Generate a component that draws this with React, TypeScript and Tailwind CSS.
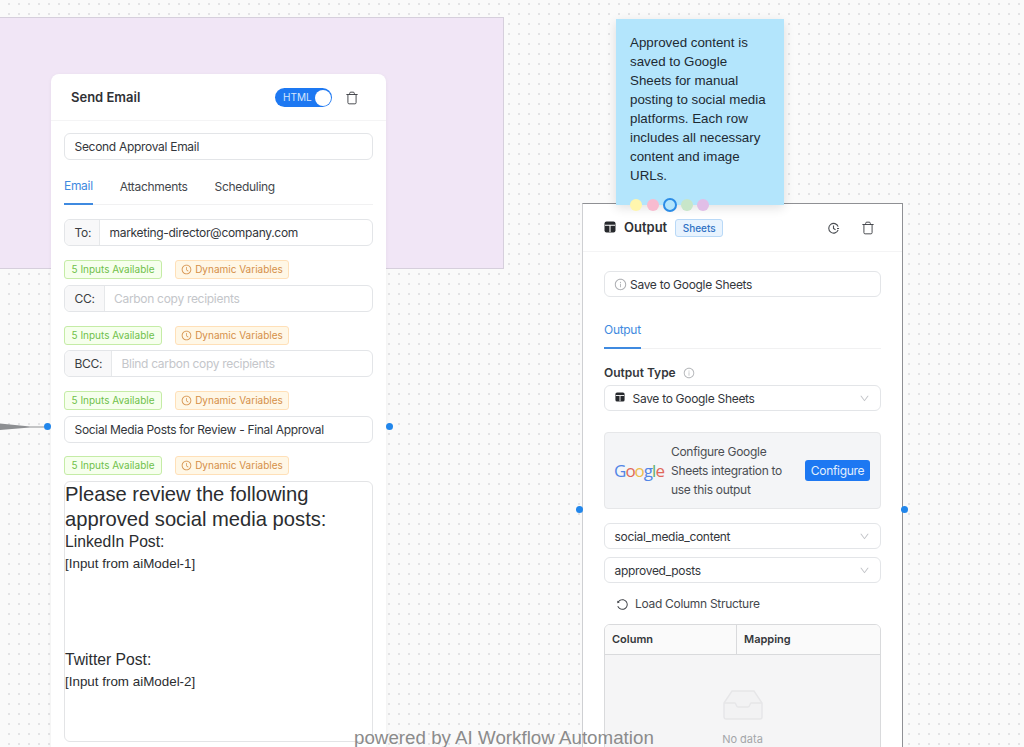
import React from "react";
import { AiOutlineClockCircle, AiOutlineInfoCircle, AiOutlineDown, AiOutlineReload } from "react-icons/ai";
import { Trash } from "lucide-react";

function Badges({ className = "" }: { className?: string }) {
  return (
    <div className={"flex items-center gap-[13px] tracking-normal " + className}>
      <span className="flex h-[19px] w-[98px] items-center justify-center rounded-[3px] border border-[#c5eca6] bg-[#f6ffed] text-[10px] text-[#6fbf4a]">5 Inputs Available</span>
      <span className="flex h-[19px] w-[114px] items-center justify-center gap-[3px] rounded-[3px] border border-[#ffe0b8] bg-[#fff7e6] text-[10px] text-[#d58f48]">
        <AiOutlineClockCircle className="h-[11px] w-[11px]" />
        Dynamic Variables
      </span>
    </div>
  );
}

function AddonInput({ label, value, placeholder, labelW }: { label: string; value?: string; placeholder?: string; labelW: string }) {
  return (
    <div className="flex h-[27px] items-stretch rounded-[6px] border border-[#e3e5e8] bg-white text-[12px]">
      <span className={"flex items-center rounded-l-[6px] border-r border-[#e6e8ea] bg-[#f8f8f9] pl-[9.5px] text-[#3a3d42] " + labelW}>{label}</span>
      <span className={"flex items-center pl-[9.5px] " + (value ? "text-[#33363b]" : "text-[#c4c6ca]")}>{value ?? placeholder}</span>
    </div>
  );
}

function Field({ children, className = "" }: { children: React.ReactNode; className?: string }) {
  return <div className={"flex items-center rounded-[6px] border border-[#e3e5e8] bg-white pl-[9.5px] pr-[10px] text-[12px] text-[#33363b] " + className}>{children}</div>;
}

function SheetIcon({ className }: { className: string }) {
  return (
    <svg viewBox="0 0 12 12" className={className}>
      <rect width="11" height="11" x="0.5" y="0.5" rx="2" fill="#26282c" />
      <path d="M1 4.2h10M6 4.2V11" stroke="#fff" strokeWidth="1.1" fill="none" />
    </svg>
  );
}

function SelectField({ children }: { children: React.ReactNode }) {
  return (
    <Field className="h-[26px] justify-between pt-[1px]">
      <span className="flex items-center">{children}</span>
      <AiOutlineDown className="h-[11px] w-[11px] text-[#c2c4c8]" />
    </Field>
  );
}

function HistoryIcon() {
  return (
    <svg viewBox="0 0 14 14" className="h-[13px] w-[13px] text-[#4a4d52]" fill="none" stroke="currentColor" strokeWidth="1.2">
      <path d="M12 8.5A5.2 5.2 0 1 1 12 5" />
      <path d="M7 3.8V7l2.2 1.4M10.8 7H13" />
    </svg>
  );
}

export default function App() {
  return (
    <div className="relative h-[747px] w-[1024px] overflow-hidden bg-[#fafafa] bg-[radial-gradient(#e1e1e3_0.7px,transparent_0.8px)] bg-[length:10px_10px] bg-[position:4px_9px] font-['Inter','Liberation_Sans',sans-serif] tracking-[-0.3px]">
      {/* group background */}
      <div className="absolute left-[-2px] top-[17px] h-[252px] w-[506px] border border-[#d6cfdc] bg-[#f1e6f6]" />

      {/* connector */}
      <svg viewBox="0 0 48 12" className="absolute left-0 top-[421px] h-[12px] w-[48px]">
        <path d="M0 2.5 L30 5.5 H44 V6.5 H30 L0 9 Z" fill="#8d8f92" />
      </svg>

      {/* send email node */}
      <div className="absolute left-[51px] top-[74px] h-[700px] w-[335px] rounded-[8px] bg-white shadow-[0_1px_4px_rgba(0,0,0,0.05)]">
        <div className="flex h-[47px] items-center border-b border-[#f4f4f5] pl-[20px] pr-[27px] pt-[1px]">
          <span className="text-[13px] font-semibold tracking-normal text-[#2f3135]">Send Email</span>
          <div className="ml-auto flex items-center gap-[13px]">
            <div className="flex h-[19px] w-[57px] items-center justify-between rounded-full bg-[#1d78f2] pl-[8px] pr-[1px] text-[10px] tracking-normal text-[#d6e6fc]">
              HTML
              <span className="h-[16px] w-[16px] rounded-full bg-white" />
            </div>
            <Trash className="h-[14px] w-[14px] text-[#3e4146]" strokeWidth={1.6} />
          </div>
        </div>
        <div className="px-[13px] pt-[12px]">
          <Field className="h-[27px]">Second Approval Email</Field>
          <div className="mt-[12px] flex h-[33px] gap-[27px] border-b border-[#f1f1f2] text-[12px] text-[#44474c]">
            <span className="flex h-[33px] items-center border-b-2 border-[#3f8ae0] pb-[4px] text-[#3f8ae0]">Email</span>
            <span className="flex h-[31px] items-center pb-[2px]">Attachments</span>
            <span className="flex h-[31px] items-center pb-[2px]">Scheduling</span>
          </div>
          <div className="mt-[14px]">
            <AddonInput label="To:" value="marketing-director@company.com" labelW="w-[35px]" />
          </div>
          <Badges className="mt-[14px]" />
          <div className="mt-[6px]">
            <AddonInput label="CC:" placeholder="Carbon copy recipients" labelW="w-[39.5px]" />
          </div>
          <Badges className="mt-[14px]" />
          <div className="mt-[5px]">
            <AddonInput label="BCC:" placeholder="Blind carbon copy recipients" labelW="w-[47px]" />
          </div>
          <Badges className="mt-[14px]" />
          <Field className="mt-[6px] h-[27px]">Social Media Posts for Review - Final Approval</Field>
          <Badges className="mt-[13px]" />
          <div className="mt-[6px] h-[261px] rounded-[6px] border border-[#e3e4e6] font-['Liberation_Sans',sans-serif] tracking-normal text-[#2b2d30]">
            <div className="text-[20.2px] leading-[25px]">
              Please review the following
              <br />
              approved social media posts:
            </div>
            <div className="text-[15.7px] leading-[20px]">LinkedIn Post:</div>
            <div className="mt-[3px] text-[13.4px] leading-[18px]">[Input from aiModel-1]</div>
            <div className="mt-[77px] text-[15.7px] leading-[20px]">Twitter Post:</div>
            <div className="mt-[3px] text-[13.4px] leading-[18px]">[Input from aiModel-2]</div>
          </div>
        </div>
      </div>
      <span className="absolute left-[44px] top-[423px] h-[7px] w-[7px] rounded-full bg-[#2186eb]" />
      <span className="absolute left-[386px] top-[423px] h-[7px] w-[7px] rounded-full bg-[#2186eb]" />

      {/* output node */}
      <div className="absolute left-[582px] top-[203px] h-[600px] w-[321px] border border-[#8f9094] border-l-[#cfd0d3] bg-white">
        <div className="flex h-[48px] items-center border-b border-[#f4f4f5] pl-[21px] pr-[27px] pt-[1px]">
          <SheetIcon className="mb-[3px] h-[12px] w-[12px]" />
          <span className="ml-[8px] text-[13px] font-semibold tracking-normal text-[#2f3135]">Output</span>
          <span className="ml-[8px] flex h-[18px] w-[48px] items-center justify-center rounded-[3px] border border-[#b9d9f7] bg-[#e8f3fe] text-[10px] font-medium tracking-normal text-[#2f72c4]">Sheets</span>
          <div className="ml-auto flex items-center gap-[21px]">
            <HistoryIcon />
            <Trash className="h-[14px] w-[14px] text-[#3e4146]" strokeWidth={1.6} />
          </div>
        </div>
        <div className="px-[21px] pt-[19px]">
          <Field className="h-[26px] pl-[9px] pt-[1px]">
            <AiOutlineInfoCircle className="mr-[3px] h-[13px] w-[13px] text-[#a9abaf]" />
            Save to Google Sheets
          </Field>
          <div className="mt-[19px] flex h-[33px] border-b border-[#f1f1f2] text-[12px]">
            <span className="flex h-[33px] items-center border-b-2 border-[#3f8ae0] pb-[4px] text-[#3f8ae0]">Output</span>
          </div>
          <div className="mt-[17px] flex h-[14px] items-center gap-[7px] text-[12px] font-semibold tracking-normal text-[#34373b]">
            Output Type
            <AiOutlineInfoCircle className="h-[12px] w-[12px] font-normal text-[#b5b7ba]" />
          </div>
          <div className="mt-[5px]">
            <SelectField>
              <SheetIcon className="mb-[3px] mr-[8px] h-[10px] w-[10px]" />
              Save to Google Sheets
            </SelectField>
          </div>
          <div className="mt-[21px] flex h-[77px] items-center rounded-[4px] border border-[#e6e7e9] bg-[#f4f5f7] pl-[9px] pr-[10px]">
            <span className="mb-[1px] w-[57px] shrink-0 font-['Open_Sans','Liberation_Sans',sans-serif] text-[17px] leading-none tracking-[-1px]">
              <span className="text-[#5286e6]">G</span>
              <span className="text-[#e0685a]">o</span>
              <span className="text-[#eebd4c]">o</span>
              <span className="text-[#5286e6]">g</span>
              <span className="text-[#5cae6c]">l</span>
              <span className="text-[#e0685a]">e</span>
            </span>
            <span className="w-[130px] shrink-0 text-[12px] leading-[19px] text-[#4b4e53]">Configure Google Sheets integration to use this output</span>
            <span className="ml-auto flex h-[21px] w-[65px] items-center justify-center rounded-[3px] bg-[#1d78f2] text-[12px] text-[#e3effd]">Configure</span>
          </div>
          <div className="mt-[14px]">
            <SelectField>social_media_content</SelectField>
          </div>
          <div className="mt-[8px]">
            <SelectField>approved_posts</SelectField>
          </div>
          <div className="mt-[11px] flex h-[20px] items-center pl-[12px] text-[12px] text-[#45484d]">
            <AiOutlineReload className="mr-[6px] h-[13px] w-[13px] -scale-x-100 text-[#3e4146]" />
            Load Column Structure
          </div>
          <div className="mt-[10px] overflow-hidden rounded-t-[6px] border border-[#d9dadc]">
            <div className="grid h-[30px] grid-cols-[132px_1fr] border-b border-[#d9dadc] bg-[#fafafa] text-[11px] font-semibold tracking-normal text-[#34373b]">
              <span className="flex items-center border-r border-[#d9dadc] pl-[7px]">Column</span>
              <span className="flex items-center pl-[7px]">Mapping</span>
            </div>
            <div className="flex h-[130px] flex-col items-center bg-[#f5f5f6] pt-[35px]">
              <svg viewBox="0 0 40 30" className="h-[30px] w-[40px]" fill="none" stroke="#e6e6e8" strokeWidth="1.4">
                <path d="M1 13 9 1h22l8 12v14a2 2 0 0 1-2 2H3a2 2 0 0 1-2-2Z" fill="#f2f2f3" />
                <path d="M1 13h11c1 0 1 4 3 4h10c2 0 2-4 3-4h11" />
              </svg>
              <span className="mt-[11px] text-[11px] tracking-normal text-[#a4a6a9]">No data</span>
            </div>
          </div>
        </div>
      </div>
      <span className="absolute left-[576px] top-[506px] h-[7px] w-[7px] rounded-full bg-[#2186eb]" />
      <span className="absolute left-[901px] top-[506px] h-[7px] w-[7px] rounded-full bg-[#2186eb]" />

      {/* sticky note */}
      <div className="absolute left-[616px] top-[19px] h-[186px] w-[168px] bg-[#b3e5fc] pl-[14px] pr-[14px] pt-[14px] font-['Liberation_Sans',sans-serif] text-[13.33px] leading-[19px] tracking-normal text-[#1d2a33] shadow-[0_3px_10px_rgba(0,0,0,0.12)]">
        Approved content is saved to Google Sheets for manual posting to social media platforms. Each row includes all necessary content and image URLs.
      </div>
      <div className="absolute left-[630px] top-[198px] flex items-center gap-[4px]">
        <span className="mr-[1px] h-[12px] w-[12px] rounded-full bg-[#fff6ad]" />
        <span className="h-[12px] w-[12px] rounded-full bg-[#f8bbd0]" />
        <span className="h-[14px] w-[14px] rounded-full border-2 border-[#2b8ce6] bg-[#b3e5fc]" />
        <span className="h-[12px] w-[12px] rounded-full bg-[#c8e6c9]" />
        <span className="h-[12px] w-[12px] rounded-full bg-[#e1bee7]" />
      </div>

      {/* watermark */}
      <div className="absolute left-[354px] top-[727px] whitespace-nowrap font-['Liberation_Sans',sans-serif] text-[18.75px] leading-[21px] tracking-normal text-[#8b8b8b]">powered by AI Workflow Automation</div>
    </div>
  );
}
